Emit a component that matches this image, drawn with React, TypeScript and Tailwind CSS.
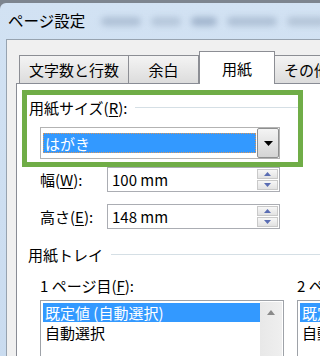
import React from "react";

const FONT = "font-['Noto_Sans_CJK_JP','Noto_Sans',sans-serif]";

function U({ children }: { children: React.ReactNode }) {
  return <span className="underline underline-offset-2 decoration-1">{children}</span>;
}

function Spinner() {
  return (
    <div className="flex flex-col w-[21px] self-stretch my-[1px] mr-[1px] gap-px">
      {["up", "down"].map((d) => (
        <div
          key={d}
          className="flex-1 flex items-center justify-center border border-[#c9c9c9] bg-gradient-to-b from-[#f7f7f7] to-[#e2e2e2]"
        >
          <svg width="7" height="4" viewBox="0 0 7 4">
            <path d={d === "up" ? "M0 4h7L3.5 0z" : "M0 0h7L3.5 4z"} fill="#5a6db3" />
          </svg>
        </div>
      ))}
    </div>
  );
}

function NumberRow({ label, value, className = "" }: { label: React.ReactNode; value: string; className?: string }) {
  return (
    <div className={`flex items-center h-[25px] pl-[23px] shrink-0 ${className}`}>
      <div className="w-[67px] text-[15px] leading-none text-black">{label}</div>
      <div className="w-[173px] h-full flex items-center border border-[#abadb3] bg-white">
        <span className="flex-1 pl-[4px] text-[15px] leading-none text-black">{value}</span>
        <Spinner />
      </div>
    </div>
  );
}

function ListBox({ width }: { width: number }) {
  return (
    <div
      className="h-[80px] flex border border-[#9ea2a8] bg-white shrink-0"
      style={{ width }}
    >
      <div className="flex-1 pl-[2px] pt-[2px] flex flex-col">
        <div className="h-[19px] bg-[#3399ff] text-white text-[15px] leading-none flex items-center pl-[2px] whitespace-nowrap">
          既定値 (自動選択)
        </div>
        <div className="h-[20px] text-black text-[15px] leading-none flex items-center pl-[2px] whitespace-nowrap">
          自動選択
        </div>
      </div>
      {width > 100 && (
        <div className="w-[22px] mt-[1px] mr-[1px] bg-gradient-to-r from-[#e8e8e8] to-[#efefef] flex flex-col items-center">
          <div className="h-[20px] flex items-center justify-center w-full">
            <svg width="8" height="5" viewBox="0 0 8 5">
              <path d="M0 5h8L4 0z" fill="#8a8a8a" />
            </svg>
          </div>
        </div>
      )}
    </div>
  );
}

export default function App() {
  const tabBase = "flex items-center justify-center shrink-0 text-[15px] leading-none text-black";
  return (
    <div className={`w-[320px] h-[356px] overflow-hidden flex flex-col bg-[#7d858f] ${FONT}`}>
      <div className="h-[3px] shrink-0" />
      {/* Window */}
      <div className="flex-1 flex flex-col rounded-tl-[6px] bg-gradient-to-b from-[#d2e2f3] to-[#c9dbef] w-[420px] shrink-0">
        {/* Title bar */}
        <div className="h-[36px] flex items-center pl-[8px] shrink-0">
          <span className="text-[15.5px] leading-none text-black">ページ設定</span>
          <div className="flex items-center gap-[10px] ml-[16px] blur-[3px] opacity-70">
            <div className="w-[40px] h-[9px] rounded-full bg-[#9fb2c9]" />
            <div className="w-[30px] h-[9px] rounded-full bg-[#a9bbd0]" />
            <div className="w-[26px] h-[9px] rounded-full bg-[#8da2bd]" />
            <div className="w-[50px] h-[9px] rounded-full bg-[#9fb2c9]" />
            <div className="w-[40px] h-[9px] rounded-full bg-[#a7b8cc]" />
          </div>
        </div>

        {/* Client area */}
        <div className="flex-1 ml-[6px] border-l border-t border-[#97a3b0] bg-[#f0f0f0] flex flex-col">
          {/* Tabs */}
          <div className="mt-[11px] ml-[12px] h-[32px] flex items-end shrink-0">
            <div className={`${tabBase} w-[110px] h-[28px] border-l border-t border-r border-[#8c8e94] bg-gradient-to-b from-[#f4f4f4] to-[#dcdcdc]`}>
              文字数と行数
            </div>
            <div className={`${tabBase} w-[70px] h-[28px] border-t border-r border-[#8c8e94] bg-gradient-to-b from-[#f4f4f4] to-[#dcdcdc]`}>
              余白
            </div>
            <div className={`${tabBase} relative z-10 w-[76px] h-[33px] -mb-px border-l border-t border-r border-[#8c8e94] bg-white`}>
              用紙
            </div>
            <div className={`${tabBase} w-[64px] h-[28px] border-t border-r border-[#8c8e94] bg-gradient-to-b from-[#f4f4f4] to-[#dcdcdc]`}>
              その他
            </div>
          </div>

          {/* Panel */}
          <div className="flex-1 ml-[9px] border-l border-t border-[#898c95] bg-white flex flex-col">
            {/* Highlighted paper size group */}
            <div className="ml-[5px] mt-[6px] w-[281px] h-[77px] border-[5px] border-[#70ad47] flex flex-col shrink-0">
              <div className="h-[25px] flex items-center pl-[2px]">
                <span className="text-[15px] leading-none text-black whitespace-nowrap">
                  用紙サイズ(<U>R</U>):
                </span>
                <div className="flex-1 h-px bg-[#d5dfe5] ml-[8px]" />
              </div>
              <div className="mt-[7px] ml-[13px] w-[240px] h-[32px] flex border border-[#b3b3b3] bg-white">
                <div className="flex-1 flex items-center pl-[2px]">
                  <div className="w-full h-[20px] bg-[#3399ff] border border-dotted border-[#d9965a] flex items-center pl-[1px] text-white text-[15px] leading-none">
                    はがき
                  </div>
                </div>
                <div className="w-[22px] ml-[1px] border border-[#8e8f8f] rounded-[2px] bg-gradient-to-b from-[#f4f4f4] to-[#d4d4d4] flex items-center justify-center">
                  <svg width="9" height="5" viewBox="0 0 9 5">
                    <path d="M0 0h9L4.5 5z" fill="#000" />
                  </svg>
                </div>
              </div>
            </div>

            <NumberRow label={<>幅(<U>W</U>):</>} value="100 mm" />
            <NumberRow label={<>高さ(<U>E</U>):</>} value="148 mm" className="mt-[12px]" />

            {/* Paper tray */}
            <div className="mt-[15px] h-[20px] flex items-center pl-[11px] shrink-0">
              <span className="text-[15px] leading-none text-black whitespace-nowrap">用紙トレイ</span>
              <div className="flex-1 h-px bg-[#d5dfe5] ml-[8px]" />
            </div>

            <div className="mt-[11px] flex pl-[23px] gap-[13px] shrink-0">
              <div className="flex flex-col shrink-0">
                <div className="h-[20px] flex items-center text-[15px] leading-none text-black whitespace-nowrap">
                  1 ページ目(<U>F</U>):
                </div>
                <div className="mt-[5px]">
                  <ListBox width={244} />
                </div>
              </div>
              <div className="flex flex-col shrink-0">
                <div className="h-[20px] flex items-center text-[15px] leading-none text-black whitespace-nowrap">
                  2 ページ目以降(<U>O</U>):
                </div>
                <div className="mt-[5px]">
                  <ListBox width={80} />
                </div>
              </div>
            </div>
          </div>
        </div>
      </div>
    </div>
  );
}
